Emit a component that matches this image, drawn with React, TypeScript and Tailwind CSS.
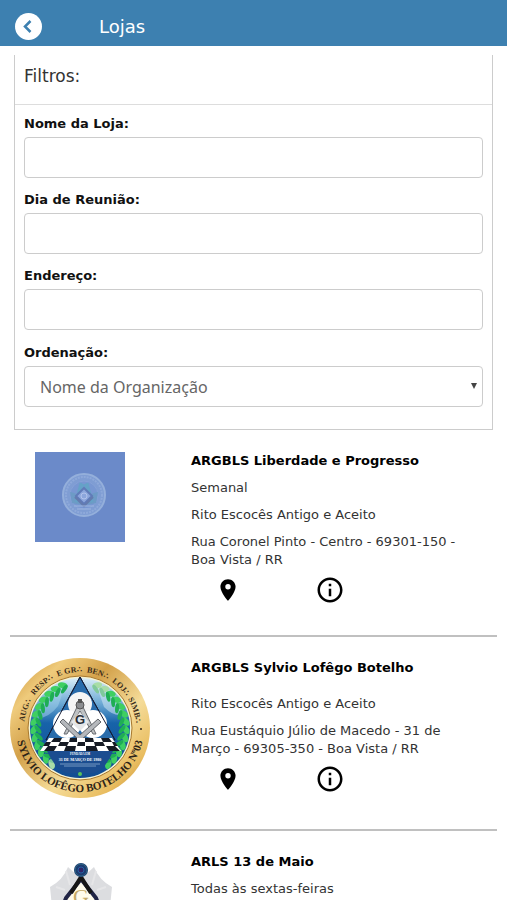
import { MdInfoOutline, MdLocationOn } from "react-icons/md";

interface Loja {
  id: number;
  nome: string;
  reuniao: string | null;
  rito: string;
  endereco: string;
  logo: React.ReactNode;
}

const campos = [
  { id: "nome", label: "Nome da Loja:" },
  { id: "dia", label: "Dia de Reunião:" },
  { id: "endereco", label: "Endereço:" },
];

function LogoPadrao() {
  return (
    <svg viewBox="0 0 90 90" className="ml-[25px] mt-[2px] size-[90px]" aria-hidden="true">
      <rect width="90" height="90" fill="#6b8ac9" />
      <circle cx="49" cy="43" r="21" fill="#7f9dd3" stroke="#94afdb" strokeWidth="2" />
      <circle cx="49" cy="43" r="18" fill="none" stroke="#8ea9da" strokeWidth="2" strokeDasharray="2 1" />
      <circle cx="49" cy="43" r="14" fill="#7897d2" stroke="#86a2d7" />
      <path d="M35 40 Q42 41 49 47 Q56 41 63 40 L61 51 Q49 54 37 51Z" fill="#6d9bc6" />
      <path d="M46 31 L43 43 M52 31 L55 43 M48 32 L41 50 M50 32 L57 50" stroke="#65a2c7" strokeWidth="3" fill="none" />
      <path d="M49 36 L57 44 L49 52 L41 44Z" fill="#8ca6dc" stroke="#607bb8" strokeWidth="2" />
      <path d="M40 45 L49 54 L58 45" fill="none" stroke="#647bae" strokeWidth="2" />
      <circle cx="49" cy="44" r="3" fill="none" stroke="#b2c3eb" />
      <path d="M39 54 H59 M42 57 H56" stroke="#9db5df" />
    </svg>
  );
}

const folhas = [-68, -58, -48, -38, -28, -18, -8, 2, 12, 22, 32, 42, 52];

function LogoSylvio() {
  return (
    <svg viewBox="0 0 142 142" className="h-[142px] w-[142px] max-w-none" aria-hidden="true">
      <defs>
        <linearGradient id="ouro" x1="0" y1="0" x2="1" y2="1">
          <stop offset="0" stopColor="#c58b2f" />
          <stop offset="0.2" stopColor="#efcb7c" />
          <stop offset="0.38" stopColor="#d3a14a" />
          <stop offset="0.62" stopColor="#f5dc99" />
          <stop offset="0.82" stopColor="#e9bd60" />
          <stop offset="1" stopColor="#bd842b" />
        </linearGradient>
        <linearGradient id="ceu" x1="0" y1="0" x2="0" y2="1">
          <stop offset="0" stopColor="#d9edf8" />
          <stop offset="0.25" stopColor="#6eaad5" />
          <stop offset="0.45" stopColor="#1763a9" />
          <stop offset="1" stopColor="#124c91" />
        </linearGradient>
        <path id="arcoCima" d="M14 71 A56 56 0 0 1 126 71" />
        <path id="arcoBaixo" d="M6 71 A64 64 0 0 0 134 71" />
      </defs>
      <circle cx="70" cy="71" r="70" fill="url(#ouro)" />
      <circle cx="70" cy="71" r="52" fill="#f4f3d4" stroke="#a9772b" />
      <circle cx="70" cy="71" r="50" fill="url(#ceu)" />
      <path d="M28 54 Q39 31 56 27 L48 49 Q39 61 26 62Z" fill="#a5d3ec" opacity=".5" />
      <path d="M86 27 Q110 34 114 57 Q105 61 94 50Z" fill="#d7ecf6" opacity=".5" />

      {folhas.map((a) => (
        <g key={a}>
          <g transform={`rotate(${-a} 70 71)`}>
            <ellipse cx="24" cy="71" rx="5" ry="3" fill={a > 42 ? "#a8dda7" : "#3fcf62"} transform="rotate(-56 24 71)" />
            <ellipse cx="28" cy="71" rx="5" ry="2" fill={a > 42 ? "#80c99c" : "#1fae55"} transform="rotate(-124 28 71)" />
          </g>
          <g transform={`rotate(${a} 70 71)`}>
            <ellipse cx="116" cy="71" rx="5" ry="3" fill={a < -48 ? "#a8dda7" : "#3fcf62"} transform="rotate(56 116 71)" />
            <ellipse cx="112" cy="71" rx="5" ry="2" fill={a < -48 ? "#80c99c" : "#1fae55"} transform="rotate(124 112 71)" />
          </g>
        </g>
      ))}

      <path d="M70 20 L105 83 H36Z" fill="#296cab" stroke="#151d37" strokeWidth="1" />
      <circle cx="70" cy="47" r="12" fill="#f5f5f5" />
      <circle cx="57" cy="67" r="14" fill="#fff" />
      <circle cx="83" cy="67" r="14" fill="#fff" />
      <path d="M70 20 L105 83 M70 20 L36 83" fill="none" stroke="#151d37" />
      <path d="M68 48 L54 77 L57 77 L70 54 L83 77 L86 77 L72 48Z" fill="#bfc2c4" stroke="#666a70" />
      <path d="M53 62 L70 78 L88 62 L91 65 L70 84 L50 65Z" fill="#b5b8bc" stroke="#62666c" />
      <circle cx="70" cy="48" r="4" fill="#8c8e91" stroke="#555" />
      <path d="M68 42 H72 V46 H68Z" fill="#555" />
      <path d="M70 55 L79 65 L70 74 L61 65Z" fill="#e4e6e8" />
      <text x="70" y="67" textAnchor="middle" className="fill-[#292f37] font-['Liberation_Sans'] text-[13px] font-bold">G</text>

      <path d="M39 81 H102 L111 94 H30Z" fill="#fff" />
      <path
        d="M44 81h8l-2 4h-9zm16 0h7v4h-8zm15 0h8l1 4h-9zm16 0h8l3 4h-9zM38 89h9l-3 5h-10zm18 0h10l-1 5H54zm20 0h10l2 5H76zm20 0h9l5 5H99zM50 85h9l-2 4h-9zm18 0h7v4h-8zm16 0h9l2 4h-10zM36 85h5l-2 4h-6zM102 85h3l3 4h-4z"
        fill="#161b25"
      />
      <path d="M37 94 H103 Q96 112 84 116 H56 Q44 110 37 94Z" fill="#1b4d90" />
      <text x="70" y="98" textAnchor="middle" className="fill-white font-['Liberation_Serif'] text-[3px] font-bold">FUNDADA EM</text>
      <text x="70" y="104" textAnchor="middle" className="fill-white font-['Liberation_Serif'] text-[4px] font-bold">31 DE MARÇO DE 1980</text>
      <path d="M50 107 H90 M54 109 H86" stroke="#9bbbd8" strokeWidth="1" opacity=".7" />
      <circle cx="70" cy="117" r="2" fill="#57c25b" />

      <text textAnchor="middle" className="fill-[#392b19] font-['Liberation_Serif'] text-[8px] font-bold">
        <textPath href="#arcoCima" startOffset="10%">AUG∴</textPath>
        <textPath href="#arcoCima" startOffset="27%">RESP∴</textPath>
        <textPath href="#arcoCima" startOffset="44%">E GR∴</textPath>
        <textPath href="#arcoCima" startOffset="60%">BEN∴</textPath>
        <textPath href="#arcoCima" startOffset="75%">LOJ∴</textPath>
        <textPath href="#arcoCima" startOffset="90%">SIMB∴</textPath>
      </text>
      <text textAnchor="middle" className="fill-[#2d2418] font-['Liberation_Serif'] text-[11px] font-bold">
        <textPath href="#arcoBaixo" startOffset="50%">SYLVIO LOFÊGO BOTELHO Nº03</textPath>
      </text>
      <circle cx="9" cy="72" r="1" fill="#322619" />
      <circle cx="131" cy="72" r="1" fill="#322619" />
    </svg>
  );
}

function LogoTrezeDeMaio() {
  return (
    <svg viewBox="0 0 142 142" className="h-[142px] w-[142px] max-w-none" aria-hidden="true">
      <path d="M58 16 Q53 29 40 36 L43 66 L55 96 L71 103 L87 96 L99 66 L102 36 Q89 29 84 16 L71 28Z" fill="#dcdde0" />
      <path d="M56 20 L60 34 M46 36 L55 39 M86 20 L82 34 M96 36 L87 39" fill="none" stroke="#e6e6e8" strokeWidth="2" />
      <path d="M71 28 L86 47 L97 76 L71 101 L45 76 L56 47Z" fill="#fffceb" stroke="#202445" strokeWidth="4" />
      <path d="M71 26 L61 42 M71 26 L81 42" stroke="#161616" strokeWidth="4" />
      <circle cx="71" cy="19" r="7" fill="#1d3b70" />
      <circle cx="71" cy="19" r="6" fill="none" stroke="#2f6a86" />
      <circle cx="71" cy="19" r="3" fill="#302466" stroke="#245fa0" />
      <text x="71" y="53" textAnchor="middle" className="fill-[#c5aa67] font-['Liberation_Serif'] text-[22px]">G</text>
    </svg>
  );
}

const lojas: Loja[] = [
  {
    id: 1,
    nome: "ARGBLS Liberdade e Progresso",
    reuniao: "Semanal",
    rito: "Rito Escocês Antigo e Aceito",
    endereco: "Rua Coronel Pinto - Centro - 69301-150 - Boa Vista / RR",
    logo: <LogoPadrao />,
  },
  {
    id: 2,
    nome: "ARGBLS Sylvio Lofêgo Botelho",
    reuniao: null,
    rito: "Rito Escocês Antigo e Aceito",
    endereco: "Rua Eustáquio Júlio de Macedo - 31 de Março - 69305-350 - Boa Vista / RR",
    logo: <LogoSylvio />,
  },
  {
    id: 3,
    nome: "ARLS 13 de Maio",
    reuniao: "Todas às sextas-feiras",
    rito: "Rito Escocês Antigo e Aceito",
    endereco: "Boa Vista / RR",
    logo: <LogoTrezeDeMaio />,
  },
];

export default function App() {
  return (
    <div className="flex h-screen flex-col bg-white font-[Verdana,'DejaVu_Sans',sans-serif] text-[#333]">
      <header className="flex h-[46px] shrink-0 items-center bg-[#3d80b0] pt-[6px] pl-[15px] text-white">
        <button type="button" aria-label="Voltar" className="flex size-[27px] items-center justify-center rounded-full bg-white">
          <svg viewBox="0 0 27 27" className="size-[27px]" aria-hidden="true">
            <path d="M15.5 8 L10 13.5 L15.5 19" fill="none" stroke="#3d80b0" strokeWidth="2.5" />
          </svg>
        </button>
        <h1 className="ml-[57px] text-[18px]">Lojas</h1>
      </header>

      <main className="min-h-0 flex-1 overflow-y-auto pt-[9px] [scrollbar-width:none]">
        <form className="mx-[14px] border-x border-b border-[#ccc] pb-[22px]">
          <h2 className="border-b border-[#ddd] px-[9px] pt-2 pb-[14px] text-[17px] leading-[27px]">Filtros:</h2>
          <div className="flex flex-col gap-[11px] px-[9px] pt-[8px]">
            {campos.map((campo) => (
              <div key={campo.id}>
                <label htmlFor={campo.id} className="block pb-[3px] text-[13px] leading-[21px] font-bold text-[#111]">
                  {campo.label}
                </label>
                <input id={campo.id} type="text" className="block h-[41px] w-full rounded-[4px] border border-[#ccc] px-3" />
              </div>
            ))}
            <div className="pt-px">
              <label htmlFor="ordem" className="block pb-[3px] text-[13px] leading-[21px] font-bold text-[#111]">
                Ordenação:
              </label>
              <div className="relative">
                <select
                  id="ordem"
                  className="block h-[41px] w-full appearance-none rounded-[4px] border border-[#ccc] bg-white px-[15px] font-['Noto_Sans',sans-serif] text-[16px] text-[#666]"
                >
                  <option>Nome da Organização</option>
                </select>
                <svg viewBox="0 0 6 6" className="pointer-events-none absolute top-[17px] right-[6px] size-[6px]" aria-hidden="true">
                  <path d="M0 0H6L3 6Z" fill="#444" />
                </svg>
              </div>
            </div>
          </div>
        </form>

        <ul className="mx-[10px] mt-[20px]">
          {lojas.map((loja) => (
            <li key={loja.id} className="mb-5 flex border-b-2 border-[#c0c0c0] pb-[30px]">
              <div className="w-[142px] shrink-0">{loja.logo}</div>
              <div className="ml-[39px] flex flex-1 flex-col pr-8 text-[13px] leading-[18px]">
                <h3 className="mb-[9px] pt-[2px] font-bold text-black">{loja.nome}</h3>
                <p className="mb-[9px]">{loja.reuniao}</p>
                <p className="mb-[9px]">{loja.rito}</p>
                <p>{loja.endereco}</p>
                <div className="mt-[6px] flex gap-[74px] pl-[24px] text-black">
                  <button type="button" aria-label="Mapa">
                    <MdLocationOn size={26} />
                  </button>
                  <button type="button" aria-label="Informações">
                    <MdInfoOutline size={30} />
                  </button>
                </div>
              </div>
            </li>
          ))}
        </ul>
      </main>
    </div>
  );
}
